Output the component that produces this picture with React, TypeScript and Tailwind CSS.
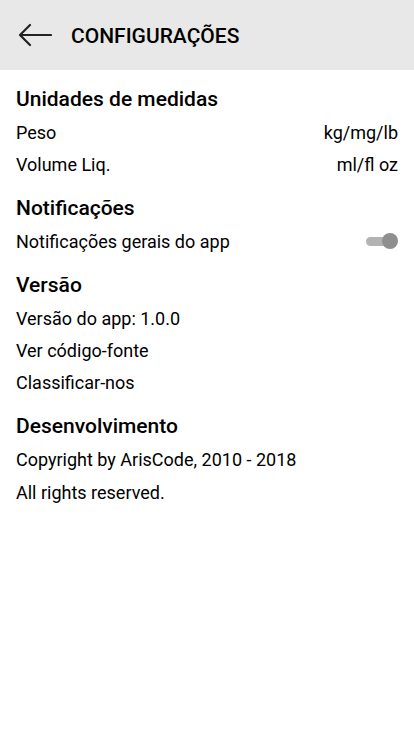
const Row = ({ label, value }: { label: string; value?: string }) => (
    <div className="flex h-8 items-center justify-between text-[18px] text-black">
        <span>{label}</span>
        {value && <span>{value}</span>}
    </div>
);

const Heading = ({ children }: { children: string }) => (
    <h2 className="flex h-8 items-center text-[21px] font-medium text-black">
        {children}
    </h2>
);

const Toggle = () => (
    <div className="relative h-4 w-[32px]">
        <div className="absolute left-0 right-1 top-[4px] h-[9px] rounded-full bg-[#b3b3b3]" />
        <div className="absolute right-0 top-0 h-4 w-4 rounded-full bg-[#8f8f8f]" />
    </div>
);

export default function App() {
    return (
        <div
            className="min-h-[736px] w-full bg-white"
            style={{ fontFamily: "Roboto, 'Noto Sans', sans-serif" }}
        >
            <header className="flex h-[70px] items-center bg-[#e8e8e8] px-[18px]">
                <svg width="34" height="24" viewBox="0 0 34 24" fill="none">
                    <path
                        d="M33 12H2M12 2L2 12l10 10"
                        stroke="#222"
                        strokeWidth="2.2"
                        strokeLinecap="round"
                        strokeLinejoin="round"
                    />
                </svg>
                <h1 className="ml-[19px] pt-[3px] text-[21px] font-medium text-black">
                    CONFIGURAÇÕES
                </h1>
            </header>

            <main className="flex flex-col gap-[13px] px-4 pt-[14px]">
                <section>
                    <Heading>Unidades de medidas</Heading>
                    <Row label="Peso" value="kg/mg/lb" />
                    <Row label="Volume Liq." value="ml/fl oz" />
                </section>

                <section>
                    <Heading>Notificações</Heading>
                    <div className="flex h-8 items-center justify-between text-[18px] text-black">
                        <span>Notificações gerais do app</span>
                        <Toggle />
                    </div>
                </section>

                <section>
                    <Heading>Versão</Heading>
                    <Row label="Versão do app: 1.0.0" />
                    <Row label="Ver código-fonte" />
                    <Row label="Classificar-nos" />
                </section>

                <section>
                    <Heading>Desenvolvimento</Heading>
                    <Row label="Copyright by ArisCode, 2010 - 2018" />
                    <div className="mt-[1px]">
                        <Row label="All rights reserved." />
                    </div>
                </section>
            </main>
        </div>
    );
}
